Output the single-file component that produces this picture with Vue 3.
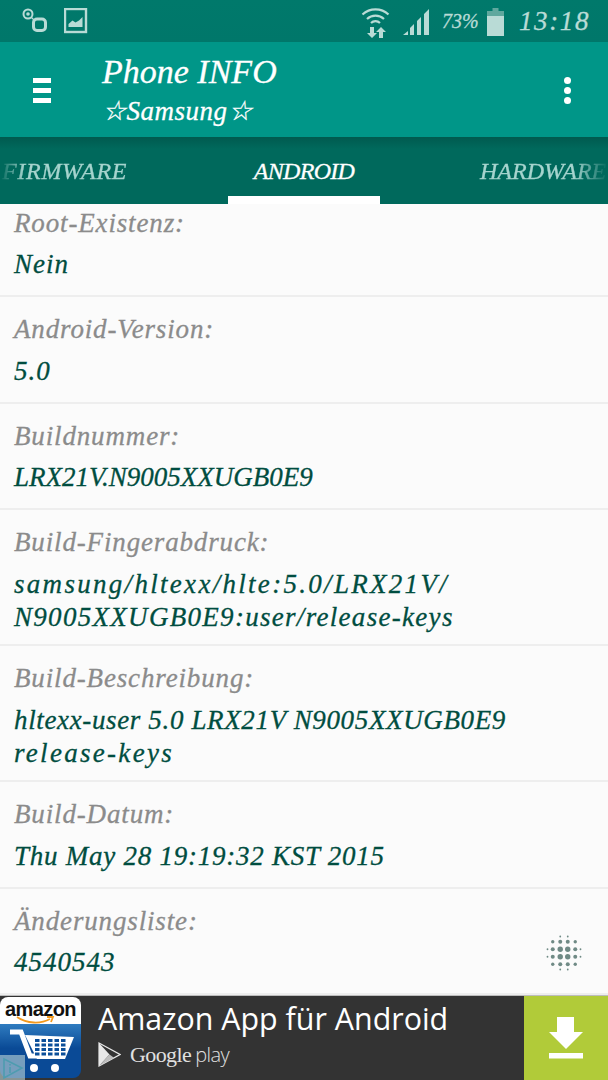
<script setup>
const rows = [
  { label: 'Root-Existenz:', lines: [{ t: 'Nein', ls: 1 }] },
  { label: 'Android-Version:', lines: [{ t: '5.0', ls: 1 }] },
  { label: 'Buildnummer:', lines: [{ t: 'LRX21V.N9005XXUGB0E9', ls: 0 }] },
  {
    label: 'Build-Fingerabdruck:',
    lines: [
      { t: 'samsung/hltexx/hlte:5.0/LRX21V/', ls: 2.3 },
      { t: 'N9005XXUGB0E9:user/release-keys', ls: 1.3 }
    ]
  },
  {
    label: 'Build-Beschreibung:',
    lines: [
      { t: 'hltexx-user 5.0 LRX21V N9005XXUGB0E9', ls: 0.64 },
      { t: 'release-keys', ls: 2.3 }
    ]
  },
  { label: 'Build-Datum:', lines: [{ t: 'Thu May 28 19:19:32 KST 2015', ls: 0.75 }] },
  { label: 'Änderungsliste:', lines: [{ t: '4540543', ls: 1 }] }
]

// halftone dots of the floating button
const dots = []
const steps = [-11.25, -3.75, 3.75, 11.25]
for (const x of steps) {
  for (const y of steps) {
    const inner = Math.abs(x) < 5 && Math.abs(y) < 5
    const corner = Math.abs(x) > 5 && Math.abs(y) > 5
    dots.push({ x, y, r: inner ? 2.7 : corner ? 1.7 : 2 })
  }
}
for (const o of [-3.75, 3.75]) {
  dots.push({ x: o, y: -16.5, r: 0.9 }, { x: o, y: 16.5, r: 0.9 }, { x: -16.5, y: o, r: 0.9 }, { x: 16.5, y: o, r: 0.9 })
}
</script>

<template>
  <div class="phone">
    <div class="status">
      <div class="status-left">
        <svg width="26" height="26" viewBox="0 0 26 26">
          <circle cx="6" cy="6" r="4.5" fill="none" stroke="#b9dbd6" stroke-width="2" />
          <circle cx="6" cy="6" r="1.8" fill="#b9dbd6" />
          <path d="M9 9l4 4" stroke="#b9dbd6" stroke-width="1.2" />
          <rect x="11.5" y="11" width="12" height="11.5" rx="3.5" fill="none" stroke="#b9dbd6" stroke-width="3" />
        </svg>
        <svg width="24" height="26" viewBox="0 0 24 26">
          <rect x="1" y="1" width="21" height="23" fill="none" stroke="#b9dbd6" stroke-width="2.4" />
          <path d="M4.5 19v-3l4-3.5 3 2 3.5-2 3.5-3.5v10z" fill="#b9dbd6" />
        </svg>
      </div>
      <div class="status-right">
        <svg width="30" height="32" viewBox="0 0 30 32" class="ic-wifi">
          <g fill="none" stroke="#b9dbd6" stroke-width="2.2">
            <path d="M1.5 8.5a19 19 0 0 1 26 0" />
            <path d="M6 13a12.5 12.5 0 0 1 17 0" />
            <path d="M10 17a6.5 6.5 0 0 1 9 0" />
          </g>
          <path d="M9 21h4v6h3l-5 5-5-5h3zM18 32v-6h-3l5-5 5 5h-3v6z" fill="#b9dbd6" />
        </svg>
        <svg width="28" height="28" viewBox="0 0 28 28" class="ic-signal">
          <path d="M0 27l5-4v4zM7 27v-7l4-4v11zM14 27V13l4-4v18zM21 27V6l5-5v26z" fill="#b9dbd6" />
        </svg>
        <span class="pct">73%</span>
        <svg width="17" height="28" viewBox="0 0 17 28" class="ic-batt">
          <path d="M5.500 0h6v3h5.500v5H0V3h5.500z" fill="#5fa89e" />
          <rect y="8" width="17" height="20" fill="#b9dbd6" />
        </svg>
        <span class="clock">13:18</span>
      </div>
    </div>

    <header class="appbar">
      <div class="burger"><i></i><i></i><i></i></div>
      <div class="titles">
        <div class="title">Phone INFO</div>
        <div class="subtitle">☆Samsung☆</div>
      </div>
      <div class="more"><i></i><i></i><i></i></div>
    </header>

    <nav class="tabs">
      <div class="tab tab-left"><span>FIRMWARE</span></div>
      <div class="tab tab-active"><span>ANDROID</span></div>
      <div class="tab tab-right"><span>HARDWARE</span></div>
    </nav>

    <main class="list">
      <section
        v-for="row in rows"
        :key="row.label"
        class="row"
        :class="{ multi: row.lines.length > 1 }"
      >
        <div class="label">{{ row.label }}</div>
        <div
          v-for="line in row.lines"
          :key="line.t"
          class="value"
          :style="{ letterSpacing: line.ls + 'px' }"
        >{{ line.t }}</div>
      </section>
      <svg class="halftone" width="40" height="40" viewBox="-20 -20 40 40">
        <circle v-for="(d, i) in dots" :key="i" :cx="d.x" :cy="d.y" :r="d.r" fill="#6f8a85" />
      </svg>
    </main>

    <footer class="ad">
      <div class="ad-icon">
        <div class="ad-icon-top">
          <span class="amazon">amazon</span>
          <svg width="40" height="8" viewBox="0 0 40 8" class="smile">
            <path d="M1 1c10 7 24 7 33 2M31 1l6 0-2 5" fill="none" stroke="#f39a1e" stroke-width="1.8" />
          </svg>
        </div>
        <div class="ad-icon-bottom">
          <svg width="66" height="50" viewBox="0 0 66 50">
            <path d="M2 5h11l9 24h30" fill="none" stroke="#fff" stroke-width="5" />
            <path d="M17 8l49 2-9 22-28 0z" fill="#fff" />
            <g fill="#0b4f9a">
              <rect
                v-for="n in 20"
                :key="n"
                :x="27 + ((n - 1) % 5) * 6.5"
                :y="12 + Math.floor((n - 1) / 5) * 4.5"
                width="4.5"
                height="3"
              />
            </g>
            <circle cx="26" cy="41" r="4" fill="#fff" />
            <circle cx="47" cy="41" r="4" fill="#fff" />
          </svg>
        </div>
      </div>
      <div class="adchoice">
        <svg width="22" height="24" viewBox="0 0 22 24">
          <path d="M2 3l18 9-18 10z" fill="none" stroke="#4e9cb0" stroke-width="1.6" />
          <path d="M8 11v6M8 8v1.500" stroke="#4e9cb0" stroke-width="1.6" />
        </svg>
      </div>
      <div class="ad-text">
        <div class="ad-title">Amazon App für Android</div>
        <div class="ad-store">
          <svg width="23" height="25" viewBox="0 0 23 25">
            <path d="M1 1l21 11.500L1 24z" fill="none" stroke="#e8e8e8" stroke-width="1.2" />
            <path d="M1 1v23l10.500-11.500z" fill="#e8e8e8" />
            <path d="M1 24l15-8.300-4.500-3.200z" fill="#bdbdbd" />
          </svg>
          <span class="gp">Google<span class="gp-play">play</span></span>
        </div>
      </div>
      <div class="ad-btn">
        <svg width="34" height="42" viewBox="0 0 34 42">
          <path d="M8 0h17v15h9L17 32 0 15h8zM0 36h34v5.500H0z" fill="#fff" />
        </svg>
      </div>
    </footer>
  </div>
</template>

<style scoped>
.phone {
  width: 608px;
  height: 1080px;
  display: flex;
  flex-direction: column;
  overflow: hidden;
  background: #fbfbfb;
  font-family: "Liberation Serif", serif;
  font-style: italic;
  -webkit-text-stroke: 0.3px currentColor;
}
.status {
  height: 42px;
  flex-shrink: 0;
  background: linear-gradient(#00796b, #00776a);
  display: flex;
  justify-content: space-between;
  align-items: center;
  padding: 0 18px 0 22px;
  box-sizing: border-box;
}
.status-left {
  display: flex;
  align-items: center;
  gap: 16px;
}
.status-right {
  display: flex;
  align-items: center;
}
.ic-wifi {
  margin-right: 12px;
  margin-top: 2px;
}
.ic-signal {
  margin-right: 11px;
  margin-top: 2px;
}
.ic-batt {
  margin-left: 5px;
  margin-right: 15px;
  margin-top: 1px;
}
.pct {
  color: #b9dbd6;
  font-size: 20px;
  width: 40px;
  white-space: nowrap;
}
.clock {
  color: #b9dbd6;
  font-size: 27px;
  letter-spacing: 1.6px;
  white-space: nowrap;
}
.appbar {
  height: 95px;
  flex-shrink: 0;
  background: #009688;
  display: flex;
  align-items: center;
  padding-left: 33px;
  box-sizing: border-box;
}
.burger {
  width: 18px;
  display: flex;
  flex-direction: column;
  gap: 5px;
  margin-top: 1px;
}
.burger i {
  display: block;
  height: 5px;
  background: #fff;
}
.titles {
  margin-left: 51px;
  flex: 1;
  color: #fff;
  padding-top: 3px;
}
.title {
  font-size: 34px;
  line-height: 44px;
  margin-top: -5px;
}
.subtitle {
  font-size: 27px;
  line-height: 34px;
  letter-spacing: 0.5px;
}
.more {
  display: flex;
  flex-direction: column;
  gap: 3px;
  margin-right: 37px;
  margin-top: 1px;
}
.more i {
  display: block;
  width: 7px;
  height: 7px;
  border-radius: 50%;
  background: #fff;
}
.tabs {
  height: 67px;
  flex-shrink: 0;
  display: grid;
  grid-template-columns: 228px 152px 228px;
  background: linear-gradient(#005a4f, #00695c 12px);
  font-size: 24px;
}
.tab {
  display: flex;
  align-items: center;
  white-space: nowrap;
  overflow: hidden;
  color: #a6d4ce;
  padding-top: 2px;
}
.tab-left {
  padding-left: 2px;
  letter-spacing: 0.7px;
  -webkit-mask-image: linear-gradient(90deg, transparent 0, #000 24px);
  mask-image: linear-gradient(90deg, transparent 0, #000 24px);
}
.tab-right {
  padding-left: 100px;
  -webkit-mask-image: linear-gradient(270deg, transparent 0, #000 34px);
  mask-image: linear-gradient(270deg, transparent 0, #000 34px);
}
.tab-active {
  color: #fff;
  letter-spacing: -0.7px;
  justify-content: center;
  border-bottom: 8px solid #fff;
  padding-top: 10px;
  box-sizing: border-box;
}
.list {
  flex: 1;
  position: relative;
  overflow: hidden;
  min-height: 0;
}
.row {
  padding: 16px 14px 14px;
  border-bottom: 2px solid #eeeeee;
}
.row.multi {
  padding-bottom: 10.5px;
}
.row:first-child {
  margin-top: -13.5px;
}
.label {
  color: #8b8b8b;
  font-size: 27px;
  line-height: 32px;
  letter-spacing: 0.85px;
  margin-bottom: 9.5px;
}
.value {
  color: #004d40;
  font-size: 27px;
  line-height: 33px;
  white-space: nowrap;
}
.halftone {
  position: absolute;
  left: 544px;
  top: 729px;
}
.ad {
  height: 85px;
  flex-shrink: 0;
  display: flex;
  position: relative;
  background: #333;
  font-style: normal;
  -webkit-text-stroke: 0;
  border-top: 1px solid #bdbdbd;
  box-sizing: border-box;
}
.ad-icon {
  width: 81px;
  height: 81px;
  margin-top: 1px;
  flex-shrink: 0;
  display: flex;
  flex-direction: column;
}
.ad-icon-top {
  height: 27px;
  background: #fff;
  border-radius: 8px 8px 0 0;
  position: relative;
  text-align: center;
}
.amazon {
  font-family: "Liberation Sans", sans-serif;
  font-weight: 700;
  font-size: 20px;
  line-height: 24px;
  color: #111;
  letter-spacing: -0.6px;
  display: block;
}
.smile {
  position: absolute;
  left: 16px;
  top: 19px;
}
.ad-icon-bottom {
  flex: 1;
  background: linear-gradient(#2f7cc0, #0a4a96 45%, #0a4a96);
  border-radius: 0 0 8px 8px;
  overflow: hidden;
  padding: 3px 0 0 8px;
}
.adchoice {
  position: absolute;
  left: 0;
  bottom: 0;
  width: 25px;
  height: 25px;
  background: rgba(190, 215, 215, 0.6);
  display: flex;
  align-items: center;
  justify-content: center;
}
.ad-text {
  flex: 1;
  padding-left: 17px;
  color: #fff;
  font-family: "Open Sans", sans-serif;
}
.ad-title {
  font-size: 30.4px;
  line-height: 44px;
  margin-top: 1px;
  white-space: nowrap;
}
.ad-store {
  display: flex;
  align-items: center;
  gap: 9px;
}
.gp {
  font-family: "Liberation Serif", serif;
  font-size: 22px;
  color: #e0e0e0;
  letter-spacing: -0.6px;
}
.gp-play {
  font-family: "Open Sans", sans-serif;
  font-weight: 300;
  font-size: 20px;
  margin-left: 4px;
}
.ad-btn {
  width: 84px;
  flex-shrink: 0;
  background: #b1cb39;
  display: flex;
  justify-content: center;
  padding-top: 21px;
  box-sizing: border-box;
}
</style>

<style>
html, body {
  margin: 0;
  background: #fbfbfb;
}
</style>
